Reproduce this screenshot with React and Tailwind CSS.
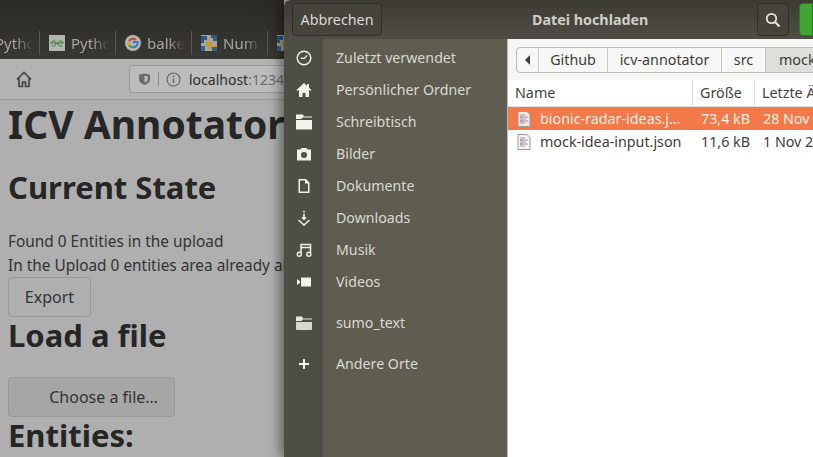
const font = { fontFamily: '"Noto Sans", "Open Sans", sans-serif' };

function Tab({ icon, label }) {
  return (
    <div className="flex h-6 w-[76px] shrink-0 items-center gap-[6px] border-r border-[#5a5850] pl-[9px]">
      {icon}
      <span className="w-[38px] overflow-hidden whitespace-nowrap text-[15px] text-[#a8a69f] [mask-image:linear-gradient(to_right,black_55%,transparent)]">{label}</span>
    </div>
  );
}

function GeekIcon() {
  return (
    <svg width="16" height="16" viewBox="0 0 16 16" className="shrink-0">
      <rect width="16" height="16" fill="#b5b5b0" />
      <path d="M7.5 8H1.5M8.5 8h6M2 8a2.6 2.6 0 1 1 .8 2.4M14 8a2.6 2.6 0 1 0-.8 2.4" fill="none" stroke="#2e7d3c" strokeWidth="1" />
    </svg>
  );
}

function GoogleIcon() {
  return (
    <svg width="16" height="16" viewBox="0 0 16 16" className="shrink-0">
      <circle cx="8" cy="8" r="8" fill="#b5b5b0" />
      <path d="M8 7.1h4.6c.3 2.8-1.6 5.2-4.6 5.2" fill="none" stroke="#3d78c9" strokeWidth="2" />
      <path d="M8 12.3c-1.7 0-3.2-1-3.9-2.4" fill="none" stroke="#3f9a50" strokeWidth="2" />
      <path d="M4.1 9.9a4.4 4.4 0 0 1 0-3.8" fill="none" stroke="#d8a92a" strokeWidth="2" />
      <path d="M4.1 6.1C5.3 3.6 8.9 3 11 4.8" fill="none" stroke="#c9433a" strokeWidth="2" />
    </svg>
  );
}

function NumpyIcon() {
  return (
    <svg width="16" height="16" viewBox="0 0 16 16" className="shrink-0">
      <rect width="16" height="16" fill="#a9a698" />
      <path d="M0 1h6v4H3v3H0zM10 0h6v6h-4V3h-2z" fill="#2f5a86" />
      <path d="M5 7h6v4h4v3H9v-3H5z" fill="#c49a34" />
      <path d="M0 11h4v5H0zM11 12h5v4h-5z" fill="#34628c" />
    </svg>
  );
}

function HomeIcon({ color }) {
  return (
    <svg width="16" height="16" viewBox="0 0 16 16">
      <path d="M8 1 0.6 8l1 1L3 7.7V15h3.5v-4h3v4H13V7.7L14.4 9l1-1-2.4-2.3V2h-2v1.8z" fill={color} fillRule="evenodd" />
    </svg>
  );
}

function ToolbarHome() {
  return (
    <svg width="16" height="17" viewBox="0 0 16 17" className="ml-4 shrink-0">
      <path d="M1 8.500 8 1.500l7 7M3 7v8.500h3.500v-4.500h3v4.500H13V7" fill="none" stroke="#454545" strokeWidth="1.700" />
    </svg>
  );
}

function SideIcon({ name }) {
  const c = '#f2f1ec';
  if (name === 'clock') {
    return (
      <svg width="16" height="16" viewBox="0 0 16 16">
        <circle cx="8" cy="8" r="6.800" fill="none" stroke={c} strokeWidth="1.400" />
        <path d="M4.600 8.400H8.400L11 5.400" fill="none" stroke={c} strokeWidth="1.200" />
      </svg>
    );
  }
  if (name === 'home') return <HomeIcon color={c} />;
  if (name === 'folder') {
    return (
      <svg width="16" height="16" viewBox="0 0 16 16">
        <path d="M0 0.500h7l1 2h8v1H6.500L5.500 5H0z" fill={c} />
        <path d="M0 6h16v9.500H0z" fill={c} />
      </svg>
    );
  }
  if (name === 'link') {
    return (
      <svg width="16" height="16" viewBox="0 0 16 16">
        <path d="M0 1.500h6l1 2h9v1H6.500L5.500 6H0z" fill="#e8e7e1" />
        <path d="M0 7h16v7a1 1 0 0 1-1 1H1a1 1 0 0 1-1-1z" fill="#d8d7d0" />
      </svg>
    );
  }
  if (name === 'camera') {
    return (
      <svg width="16" height="16" viewBox="0 0 16 16">
        <path d="M1 3.500h3.500L5.500 2h5l1 1.500H15v11H1zM8 6a3 3 0 1 0 0 6 3 3 0 0 0 0-6z" fill={c} fillRule="evenodd" />
      </svg>
    );
  }
  if (name === 'doc') {
    return (
      <svg width="16" height="16" viewBox="0 0 16 16">
        <path d="M2.500 1H10l3.500 3.500V15h-11zM4 2.500v11h8V5.500H9v-3z" fill={c} fillRule="evenodd" />
      </svg>
    );
  }
  if (name === 'download') {
    return (
      <svg width="16" height="16" viewBox="0 0 16 16">
        <path d="M7.200 1h1.600v1.600H7.200zM7.200 3.800h1.600v3.400h2.200L8 10.400 5 7.200h2.200z" fill={c} />
        <path d="M3 9.500 8 14l5-4.500 1 1L8 16l-6-5.500z" fill={c} />
      </svg>
    );
  }
  if (name === 'music') {
    return (
      <svg width="16" height="16" viewBox="0 0 16 16">
        <path d="M5 11.500V2.500h9.500v9M5 5.500h9.500" fill="none" stroke={c} strokeWidth="1.500" />
        <circle cx="3.300" cy="12.300" r="2" fill="none" stroke={c} strokeWidth="1.400" />
        <circle cx="12.800" cy="12.300" r="2" fill="none" stroke={c} strokeWidth="1.400" />
      </svg>
    );
  }
  if (name === 'video') {
    return (
      <svg width="16" height="16" viewBox="0 0 16 16">
        <path d="M5 3.500h10v9H5zM1 5l3 2.200v1.600L1 11z" fill={c} />
      </svg>
    );
  }
  return (
    <svg width="16" height="16" viewBox="0 0 16 16">
      <path d="M7 3h2v4h4v2H9v4H7V9H3V7h4z" fill={c} />
    </svg>
  );
}

function SideRow({ icon, label, className = '' }) {
  return (
    <div className={`flex h-8 items-center ${className}`}>
      <div className="flex w-[39px] shrink-0 justify-center">
        <SideIcon name={icon} />
      </div>
      <span className="pl-[13px] text-[14.2px] text-[#d9d8d0]">{label}</span>
    </div>
  );
}

function FileIcon({ selected }) {
  return (
    <svg width="14" height="16" viewBox="0 0 14 16" className="shrink-0">
      <path d="M1 .5h9L13 3.500V15.500H1z" fill={selected ? '#f1e7e0' : '#f4f4f2'} stroke="#9a9a96" />
      <path d="M3 4h5M3 6h8M3 8h6M3 10h8M3 12h5" stroke="#a79ab0" strokeWidth="1" />
      <path d="M3 6h3M3 10h3" stroke="#c9737d" strokeWidth="1" />
    </svg>
  );
}

function FileRow({ name, size, date, selected }) {
  return (
    <div className={`flex h-[23px] items-center pt-px text-[14.3px] whitespace-nowrap ${selected ? 'bg-[#f37a48] text-[#fdf0e8]' : 'bg-white text-[#3d3c38]'}`}>
      <div className="flex w-[185px] shrink-0 items-center pl-[9px]">
        <FileIcon selected={selected} />
        <span className="ml-[9px] w-[146px] overflow-hidden text-ellipsis">{name}</span>
      </div>
      <div className="w-[62px] shrink-0 pl-[8px]">{size}</div>
      <div className="shrink-0 pl-[8px]">{date}</div>
    </div>
  );
}

export default function App() {
  return (
    <div className="flex h-[457px] w-[813px] overflow-hidden bg-[#afafaf]" style={font}>
      {/* browser behind the dialog */}
      <div className="flex w-[284px] shrink-0 flex-col overflow-hidden">
        <div className="flex h-[59px] shrink-0 items-end bg-gradient-to-b from-[#2b2924] to-[#3a3832] pb-1">
          <div className="ml-[-36px] flex">
            <Tab icon={<span className="w-4 shrink-0" />} label="Pytho" />
            <Tab icon={<GeekIcon />} label="Pytho" />
            <Tab icon={<GoogleIcon />} label="balke" />
            <Tab icon={<NumpyIcon />} label="Num" />
            <Tab icon={<NumpyIcon />} label="" />
          </div>
        </div>
        <div className="flex h-[41px] shrink-0 items-center border-b border-[#989898] bg-[#b3b3b3]">
          <ToolbarHome />
          <div className="ml-[97px] flex h-7 w-[170px] shrink-0 items-center overflow-hidden rounded-l-[4px] border border-r-0 border-[#9a9a9a] bg-[#bcbcbc] pl-2">
            <svg width="13" height="14" viewBox="0 0 14 14" className="shrink-0">
              <path d="M7 1 13 2.500V7c0 3-3 5.500-6 6.500C4 12.500 1 10 1 7V2.500z" fill="#6a6a6a" />
              <path d="M7 3.500 10.500 4.400V7C10.500 8.800 9 10.300 7 11z" fill="#bcbcbc" />
            </svg>
            <div className="mx-[7px] h-[14px] w-px shrink-0 bg-[#8a8a8a]" />
            <svg width="15" height="15" viewBox="0 0 15 15" className="shrink-0">
              <circle cx="7.500" cy="7.500" r="6.500" fill="none" stroke="#666" strokeWidth="1.200" />
              <path d="M7.500 6.500v4.500M7.500 3.500v1.600" stroke="#666" strokeWidth="1.400" />
            </svg>
            <span className="ml-[8px] whitespace-nowrap text-[14px] text-[#2f2f2f]">
              localhost<span className="text-[#6d6d6d]">:1234</span>
            </span>
          </div>
        </div>
        <div className="flex-1 pl-2 text-[#262626]">
          <h1 className="mt-[-4px] h-[56px] whitespace-nowrap text-[39px] leading-[56px] font-bold">ICV Annotator</h1>
          <h2 className="mt-[15px] h-[40px] whitespace-nowrap text-[31px] leading-[40px] font-bold">Current State</h2>
          <p className="mt-[23px] whitespace-nowrap text-[15.4px] leading-6 text-[#333]">Found 0 Entities in the upload</p>
          <p className="h-[23px] whitespace-nowrap text-[15.4px] leading-6 text-[#333]">In the Upload 0 entities area already annotated</p>
          <div className="flex h-10 w-[83px] items-center justify-center rounded border border-[#989898] text-[16px] text-[#333]">Export</div>
          <h2 className="h-[38px] whitespace-nowrap text-[31px] leading-[36px] font-bold">Load a file</h2>
          <div className="mt-[22px] flex h-10 w-[167px] items-center justify-end rounded border border-[#989898] bg-[#a6a6a6] pr-[16px] text-[16px] text-[#333]">Choose a file…</div>
          <h2 className="h-[38px] whitespace-nowrap text-[31px] leading-[36px] font-bold">Entities:</h2>
        </div>
      </div>

      {/* file chooser dialog */}
      <div className="flex w-[529px] shrink-0 flex-col rounded-tl-[6px] bg-white shadow-[-4px_0_12px_rgba(0,0,0,0.45)]">
        <header className="flex h-[39px] shrink-0 items-center rounded-tl-[6px] bg-gradient-to-b from-[#3c3a34] to-[#4f4d44] pl-2">
          <div className="flex h-[33px] w-[90px] shrink-0 items-center justify-center rounded border border-[#2f2e29] bg-[#45433c] text-[14.3px] text-[#dad9d2]">Abbrechen</div>
          <div className="w-[375px] shrink-0 pl-[150px] text-[14.3px] font-bold text-[#cfcec7]">Datei hochladen</div>
          <div className="flex h-[33px] w-[32px] shrink-0 items-center justify-center rounded border border-[#2f2e29] bg-[#45433c]">
            <svg width="16" height="16" viewBox="0 0 16 16">
              <circle cx="6.500" cy="6.500" r="4.700" fill="none" stroke="#e8e7e1" strokeWidth="1.800" />
              <path d="M10 10l4.500 4.500" stroke="#e8e7e1" strokeWidth="2.200" />
            </svg>
          </div>
          <div className="ml-[10px] h-[33px] flex-1 rounded-l border border-[#2c7a25] bg-[#3fa535]" />
        </header>
        <div className="flex min-h-0 flex-1">
          <aside className="flex w-[224px] shrink-0 flex-col border-r border-[#bdbcb5] bg-[linear-gradient(to_right,#4f4e45_39px,#5f5d50_39px)] pt-[3px]">
            <SideRow icon="clock" label="Zuletzt verwendet" />
            <SideRow icon="home" label="Persönlicher Ordner" />
            <SideRow icon="folder" label="Schreibtisch" />
            <SideRow icon="camera" label="Bilder" />
            <SideRow icon="doc" label="Dokumente" />
            <SideRow icon="download" label="Downloads" />
            <SideRow icon="music" label="Musik" />
            <SideRow icon="video" label="Videos" />
            <SideRow icon="link" label="sumo_text" className="mt-[9px]" />
            <SideRow icon="plus" label="Andere Orte" className="mt-[9px]" />
          </aside>
          <main className="min-w-0 flex-1 overflow-hidden bg-white">
            <div className="flex h-[41px] items-center bg-[#f5f5f3] pl-[8px]">
              <div className="flex h-[26px] w-[400px] shrink-0 items-stretch rounded border border-[#bdbcb7] bg-[#f7f7f5] text-[14.3px] text-[#3d3c38]">
                <div className="flex w-[22px] items-center justify-center border-r border-[#c9c8c3]">
                  <span className="h-0 w-0 border-y-[5px] border-r-[5px] border-y-transparent border-r-[#3d3c38]" />
                </div>
                <div className="flex w-[69px] items-center justify-center border-r border-[#c9c8c3]">Github</div>
                <div className="flex w-[114px] items-center justify-center border-r border-[#c9c8c3]">icv-annotator</div>
                <div className="flex w-[44px] items-center justify-center border-r border-[#c9c8c3]">src</div>
                <div className="flex-1 bg-[#dededa] pl-[13px] leading-[24px]">mock</div>
              </div>
            </div>
            <div className="flex h-[27px] items-center border-b border-[#e2e2de] text-[14.3px] text-[#45443f]">
              <div className="flex h-full w-[185px] shrink-0 items-center border-r border-[#e2e2de] pl-[7px]">Name</div>
              <div className="flex h-full w-[62px] shrink-0 items-center border-r border-[#e2e2de] pl-[7px]">Größe</div>
              <div className="shrink-0 whitespace-nowrap pl-[7px]">Letzte Änderung</div>
            </div>
            <FileRow name="bionic-radar-ideas.json" size="73,4 kB" date="28 Nov 2019" selected />
            <FileRow name="mock-idea-input.json" size="11,6 kB" date="1 Nov 2019" />
          </main>
        </div>
      </div>
    </div>
  );
}
